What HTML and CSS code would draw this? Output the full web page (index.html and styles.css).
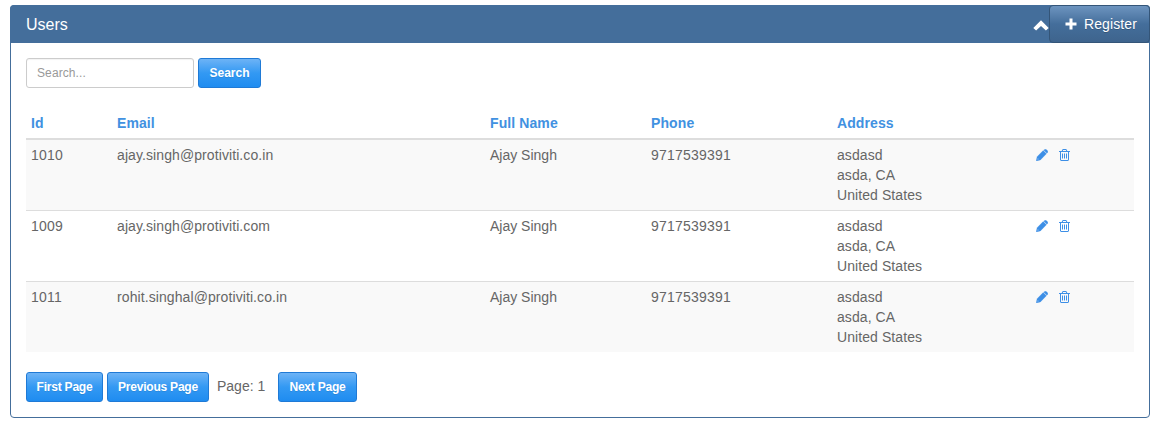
FILE: index.html
```
<!DOCTYPE html>
<html lang="en">
<head>
<meta charset="utf-8">
<title>Users</title>
<link rel="stylesheet" href="styles.css">
</head>
<body>
<svg class="sprite" aria-hidden="true">
  <symbol id="pencil" viewBox="0 0 12 12"><path d="M8.300.7Q9.300-.2 10.300.6L11.500 1.800Q12.300 2.700 11.400 3.700L10.900 4.200 7.800 1.200ZM7.200 1.600L10.400 4.800 4.400 10.900 .2 11.900 1.100 7.700ZM1.800 9.200L1.400 10.600 2.800 10.300Z" fill-rule="evenodd" stroke="currentColor" stroke-width=".3"/></symbol>
  <symbol id="trash" viewBox="192 0 1408 1664"><path d="M704 736v576q0 14-9 23t-23 9h-64q-14 0-23-9t-9-23v-576q0-14 9-23t23-9h64q14 0 23 9t9 23zm256 0v576q0 14-9 23t-23 9h-64q-14 0-23-9t-9-23v-576q0-14 9-23t23-9h64q14 0 23 9t9 23zm256 0v576q0 14-9 23t-23 9h-64q-14 0-23-9t-9-23v-576q0-14 9-23t23-9h64q14 0 23 9t9 23zm128 724v-948h-896v948q0 22 7 40.500t14.500 27 10.500 8.500h832q3 0 10.500-8.500t14.500-27 7-40.500zm-672-1076h448l-48-117q-7-9-17-11h-317q-10 2-17 11zm928 32v64q0 14-9 23t-23 9h-96v948q0 83-47 143.500t-113 60.500h-832q-66 0-113-58.500t-47-141.500v-952h-96q-14 0-23-9t-9-23v-64q0-14 9-23t23-9h309l70-167q15-37 54-63t79-26h320q40 0 79 26t54 63l70 167h309q14 0 23 9t9 23z"/></symbol>
</svg>
<section class="panel">
  <header class="panel-head">
    <h1 class="title">Users</h1>
    <svg class="chevron" viewBox="0 0 16 11"><path d="M8 .3L15.700 7.900 12.900 10.600 8 5.900 3.100 10.600 .3 7.900Z"/></svg>
    <button class="register"><svg class="plus" viewBox="0 0 12 12"><path d="M4.500.5h3v4h4v3h-4v4h-3v-4h-4v-3h4Z"/></svg>Register</button>
  </header>
  <div class="panel-body">
    <form class="search">
      <input class="field" type="text" placeholder="Search...">
      <button class="btn btn-search" type="button">Search</button>
    </form>
    <table class="users">
      <colgroup><col class="c-id"><col class="c-email"><col class="c-name"><col class="c-phone"><col class="c-address"><col></colgroup>
      <thead><tr><th>Id</th><th>Email</th><th>Full Name</th><th>Phone</th><th>Address</th><th></th></tr></thead>
      <tbody>
        <tr><td class="num">1010</td><td class="email">ajay.singh@protiviti.co.in</td><td>Ajay Singh</td><td class="num">9717539391</td><td class="address">asdasd<br>asda, CA<br>United States</td><td><div class="actions"><svg class="pencil"><use href="#pencil"/></svg><svg class="trash"><use href="#trash"/></svg></div></td></tr>
        <tr><td class="num">1009</td><td class="email">ajay.singh@protiviti.com</td><td>Ajay Singh</td><td class="num">9717539391</td><td class="address">asdasd<br>asda, CA<br>United States</td><td><div class="actions"><svg class="pencil"><use href="#pencil"/></svg><svg class="trash"><use href="#trash"/></svg></div></td></tr>
        <tr><td class="num">1011</td><td class="email">rohit.singhal@protiviti.co.in</td><td>Ajay Singh</td><td class="num">9717539391</td><td class="address">asdasd<br>asda, CA<br>United States</td><td><div class="actions"><svg class="pencil"><use href="#pencil"/></svg><svg class="trash"><use href="#trash"/></svg></div></td></tr>
      </tbody>
    </table>
    <nav class="pager">
      <button class="btn btn-first">First Page</button>
      <button class="btn btn-prev">Previous Page</button>
      <span class="page">Page: 1</span>
      <button class="btn btn-next">Next Page</button>
    </nav>
  </div>
</section>
</body>
</html>
```
FILE: styles.css
```
* { box-sizing: border-box; }
body {
  margin: 0;
  padding: 5px 8px 0 10px;
  background: #fff;
  color: #666;
  font: 14px/20px "Liberation Sans", Arial, sans-serif;
}
button, input { font-family: inherit; }
svg { display: block; fill: currentColor; }
.sprite { display: none; }

.panel {
  height: 413px;
  border: 1px solid #446e9b;
  border-radius: 4px;
}
.panel-head {
  display: flex;
  align-items: center;
  height: 38px;
  margin: -1px -1px 0;
  padding-left: 16px;
  border-radius: 4px 4px 0 0;
  background: #446e9b;
  color: #fff;
}
.title { flex: 1; margin: 1px 0 0; font-size: 16px; font-weight: 400; }
.chevron { width: 16px; height: 11px; margin-top: 2px; }
.register {
  display: flex;
  align-items: center;
  gap: 7px;
  width: 101px;
  height: 38px;
  padding: 0 0 0 15px;
  border: 1px solid #345578;
  border-radius: 4px;
  background: linear-gradient(#6d94bf, #446e9b 50%, #3e648d);
  color: #fff;
  font-size: 14px;
  letter-spacing: 0.1px;
  text-shadow: 0 1px 0 rgba(0, 0, 0, 0.2);
}
.plus { width: 12px; height: 12px; }

.panel-body { padding: 15px; }
.search { display: flex; gap: 4px; margin-bottom: 20px; }
.field {
  width: 168px;
  height: 30px;
  padding: 5px 10px;
  border: 1px solid #ccc;
  border-radius: 3px;
  box-shadow: inset 0 1px 1px rgba(0, 0, 0, 0.05);
  font-size: 12px;
  letter-spacing: 0.1px;
}
.field::placeholder { color: #999; opacity: 1; }
.btn {
  height: 30px;
  padding: 0;
  border: 1px solid #1f7ad6;
  border-radius: 3px;
  background: linear-gradient(#6db3f6, #3399f3 50%, #1f8cf0);
  color: #fff;
  font-size: 12px;
  font-weight: 700;
  line-height: 18px;
  text-shadow: 0 1px 0 rgba(0, 0, 0, 0.1);
}
.btn-search { width: 63px; }

.users { width: 100%; table-layout: fixed; border-collapse: separate; border-spacing: 0; }
.c-id { width: 86px; }
.c-email { width: 373px; }
.c-name { width: 161px; }
.c-phone { width: 186px; }
.c-address { width: 199px; }
.users th { height: 32px; padding: 5px; border-bottom: 2px solid #ddd; color: #4191e1; text-align: left; letter-spacing: 0.1px; }
.users td { padding: 5px; vertical-align: top; }
.users .num { letter-spacing: 0.22px; }
.users .email { letter-spacing: 0.09px; }
.users .address { letter-spacing: 0.08px; }
.users tbody tr + tr td { border-top: 1px solid #ddd; }
.users tbody tr:nth-child(odd) { background: #f9f9f9; }
.actions { display: flex; align-items: center; gap: 11px; height: 20px; color: #3d8fe6; }
.pencil { width: 12px; height: 12px; }
.trash { width: 11px; height: 13px; margin-top: -1px; }

.pager { display: flex; align-items: center; margin-top: 20px; }
.btn-first { width: 77px; margin-right: 4px; }
.btn-prev { width: 102px; margin-right: 8px; }
.page { width: 61px; margin-top: -2px; }
.btn-next { width: 79px; }
.pager .btn { letter-spacing: -0.22px; }
```
